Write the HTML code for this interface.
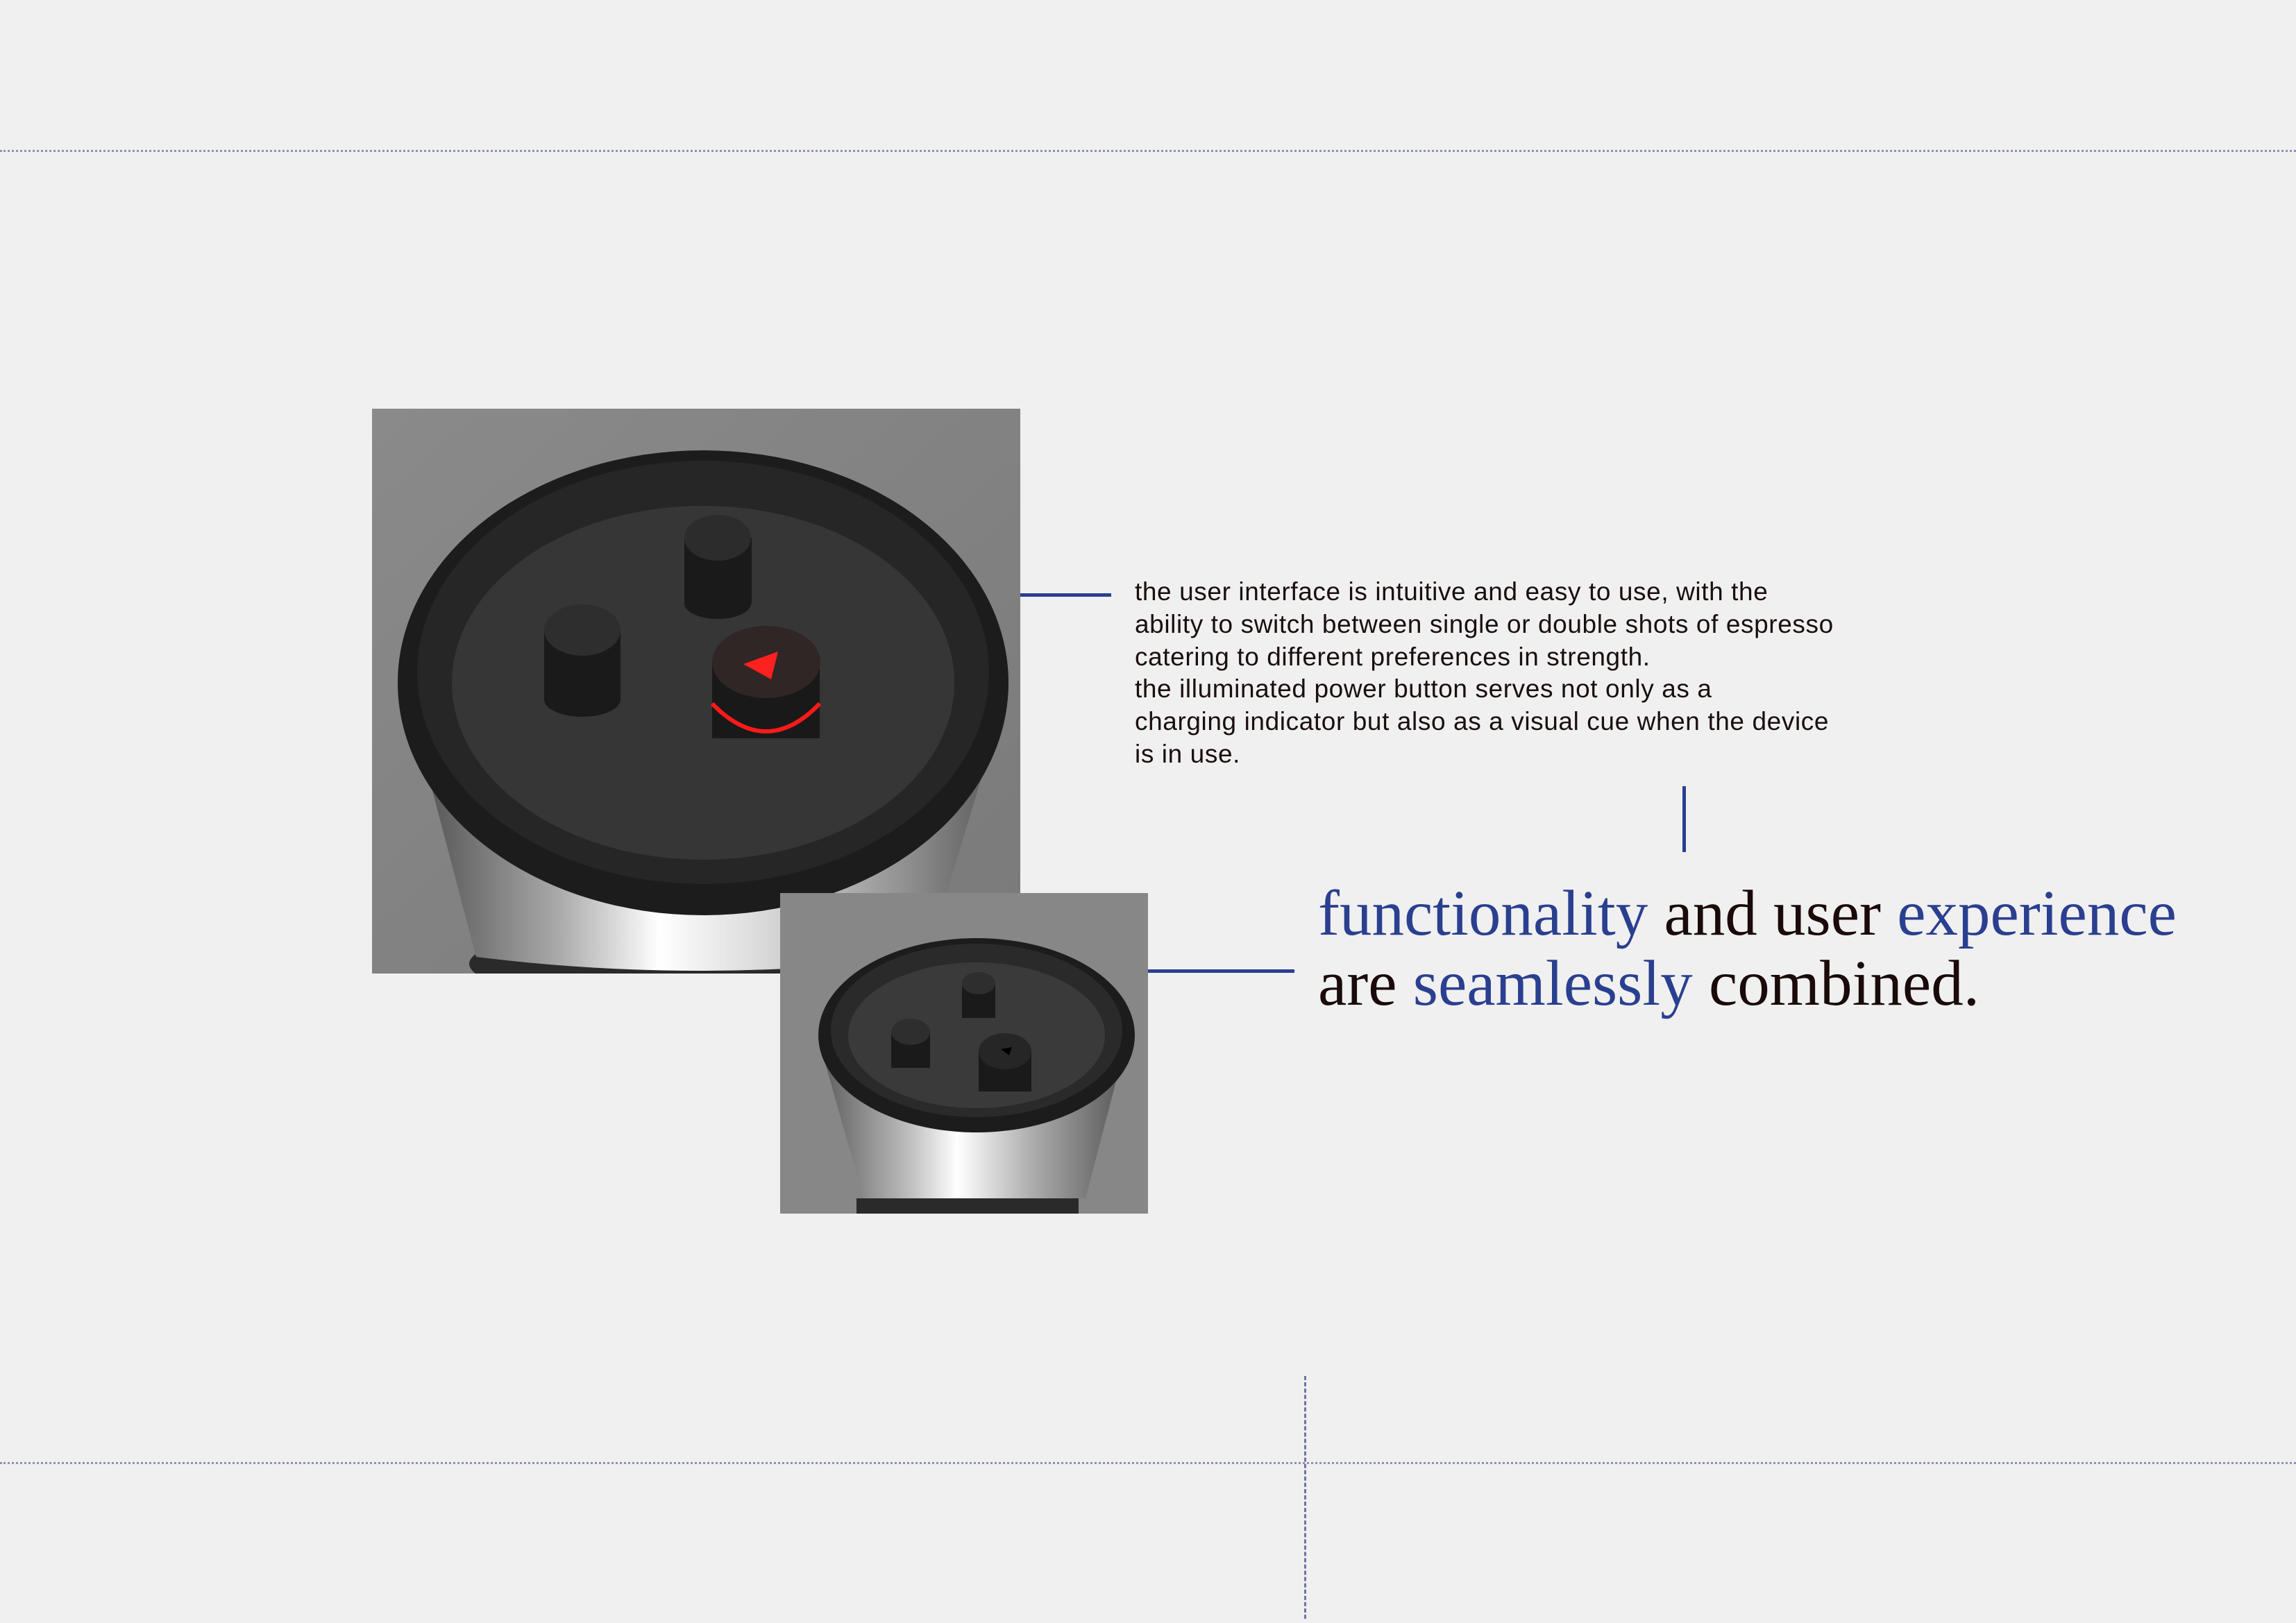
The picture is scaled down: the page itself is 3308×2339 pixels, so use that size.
<!DOCTYPE html>
<html><head><meta charset="utf-8"><style>
html,body{margin:0;padding:0}
body{width:3308px;height:2339px;background:#f0f0f0;position:relative;overflow:hidden;font-family:"Liberation Sans",sans-serif}
.hd{position:absolute;left:0;width:3308px;border-top:3px dotted #8d90b8}
.abs{position:absolute}
.body{left:1635px;top:830px;font-size:37px;line-height:46.8px;color:#1a0e0e;letter-spacing:0.6px;white-space:nowrap}
.head{left:1899px;top:1266px;font-family:"Liberation Serif",serif;font-size:93px;line-height:101px;color:#1a0a0a;white-space:nowrap}
.b{color:#2a3f8f}
</style></head><body>
<div class="hd" style="top:216px"></div>
<div class="hd" style="top:2107px"></div>
<div class="abs" style="left:1879px;top:1983px;height:350px;border-left:3px dashed #6e74a6"></div>

<svg class="abs" style="left:536px;top:589px" width="934" height="814" viewBox="0 0 934 814">
<defs>
<linearGradient id="bg1" x1="0" y1="0" x2="1" y2="1"><stop offset="0" stop-color="#8a8a8a"/><stop offset="1" stop-color="#7a7a7a"/></linearGradient>
<linearGradient id="sv1" x1="0" y1="0" x2="1" y2="0"><stop offset="0" stop-color="#4a4a4a"/><stop offset=".25" stop-color="#a8a8a8"/><stop offset=".42" stop-color="#ffffff"/><stop offset=".6" stop-color="#d8d8d8"/><stop offset=".85" stop-color="#8a8a8a"/><stop offset="1" stop-color="#555"/></linearGradient>
</defs>
<rect width="934" height="814" fill="url(#bg1)"/>
<ellipse cx="470" cy="800" rx="330" ry="60" fill="#2a2a2a"/>
<path d="M50 410 L150 790 Q470 830 800 790 L915 410 Z" fill="url(#sv1)"/>
<ellipse cx="477" cy="395" rx="440" ry="335" fill="#1c1c1c"/>
<ellipse cx="477" cy="380" rx="412" ry="305" fill="#262626"/>
<ellipse cx="477" cy="395" rx="362" ry="255" fill="#363636"/>
<g>
<rect x="450" y="186" width="97" height="95" fill="#1a1a1a"/><ellipse cx="498" cy="281" rx="48" ry="22" fill="#1a1a1a"/><ellipse cx="498" cy="186" rx="48" ry="33" fill="#2c2c2c"/>
<rect x="248" y="319" width="110" height="100" fill="#1a1a1a"/><ellipse cx="303" cy="419" rx="55" ry="25" fill="#1a1a1a"/><ellipse cx="303" cy="319" rx="55" ry="37" fill="#2e2e2e"/>
<rect x="490" y="365" width="155" height="110" fill="#191919"/>
<path d="M490 425 Q568 505 645 425" stroke="#ff1a1a" stroke-width="6" fill="none"/>
<ellipse cx="568" cy="365" rx="78" ry="52" fill="#302626"/>
<path d="M535 368 L585 350 L575 390 Z" fill="#ff2020"/>
</g>
</svg>

<svg class="abs" style="left:1124px;top:1287px" width="530" height="462" viewBox="0 0 530 462">
<defs>
<linearGradient id="sv2" x1="0" y1="0" x2="1" y2="0"><stop offset="0" stop-color="#5a5a5a"/><stop offset=".3" stop-color="#c0c0c0"/><stop offset=".45" stop-color="#ffffff"/><stop offset=".7" stop-color="#aaa"/><stop offset="1" stop-color="#555"/></linearGradient>
</defs>
<rect width="530" height="462" fill="#878787"/>
<rect x="110" y="440" width="320" height="22" fill="#2a2a2a"/>
<path d="M55 210 L120 440 L440 440 L500 210 Z" fill="url(#sv2)"/>
<ellipse cx="283" cy="205" rx="228" ry="140" fill="#1c1c1c"/>
<ellipse cx="283" cy="198" rx="210" ry="125" fill="#2a2a2a"/>
<ellipse cx="283" cy="205" rx="185" ry="105" fill="#3a3a3a"/>
<rect x="262" y="130" width="48" height="50" fill="#1a1a1a"/><ellipse cx="286" cy="130" rx="24" ry="16" fill="#2e2e2e"/>
<rect x="160" y="200" width="56" height="52" fill="#1a1a1a"/><ellipse cx="188" cy="200" rx="28" ry="19" fill="#2e2e2e"/>
<rect x="286" y="228" width="76" height="58" fill="#1a1a1a"/><ellipse cx="324" cy="228" rx="38" ry="26" fill="#262626"/>
<path d="M318 225 L334 222 L330 234 Z" fill="#000"/>
</svg>

<div class="abs" style="left:1470px;top:855px;width:131px;height:5px;background:#2a3f8f"></div>
<div class="abs" style="left:2424px;top:1133px;width:5px;height:95px;background:#2a3f8f"></div>
<div class="abs" style="left:1654px;top:1397px;width:211px;height:5px;background:#2a3f8f"></div>

<div class="abs body">the user interface is intuitive and easy to use, with the<br>ability to switch between single or double shots of espresso<br>catering to different preferences in strength.<br>the illuminated power button serves not only as a<br>charging indicator but also as a visual cue when the device<br>is in use.</div>

<div class="abs head"><span class="b">functionality</span> and user <span class="b">experience</span><br>are <span class="b">seamlessly</span> combined.</div>
</body></html>
